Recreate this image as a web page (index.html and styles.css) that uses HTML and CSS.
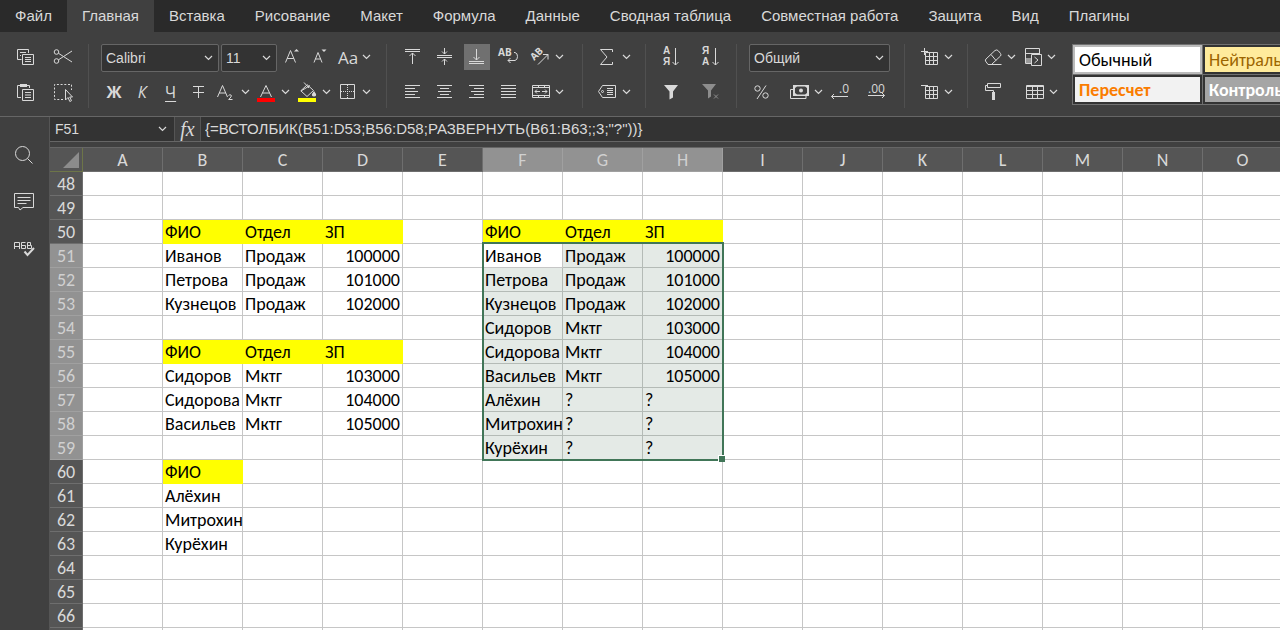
FILE: index.html
```html
<!DOCTYPE html>
<html lang="ru">
<head>
<meta charset="utf-8">
<meta name="viewport" content="width=device-width, initial-scale=1">
<title>Таблица</title>
<link rel="stylesheet" href="styles.css">
</head>
<body>
<svg class="defs" aria-hidden="true">
  <symbol id="caret" viewBox="0 0 9 6"><path d="M1 1l3.5 3.5L8 1"/></symbol>
</svg>
<div class="app">
<nav class="tabs" aria-label="Вкладки">
  <a class="tab" href="#file">Файл</a>
  <a class="tab tab-active" href="#home" aria-current="page">Главная</a>
  <a class="tab" href="#insert">Вставка</a>
  <a class="tab" href="#draw">Рисование</a>
  <a class="tab" href="#layout">Макет</a>
  <a class="tab" href="#formula">Формула</a>
  <a class="tab" href="#data">Данные</a>
  <a class="tab" href="#pivot">Сводная таблица</a>
  <a class="tab" href="#collab">Совместная работа</a>
  <a class="tab" href="#protect">Защита</a>
  <a class="tab" href="#view">Вид</a>
  <a class="tab" href="#plugins">Плагины</a>
</nav>

<div class="toolbar" role="toolbar" aria-label="Главная">
  <div class="group">
    <div class="row gap-l">
      <button class="tool" aria-label="Копировать"><svg class="ico" viewBox="0 0 20 20"><path d="M6.500 12.500H2.500V2.500H13.500V6M5 5.500H11M5 8.500H6M7.500 7.500H18.500V17.500H7.500ZM10 10.500H16M10 12.500H16M10 14.500H16"/></svg></button>
      <button class="tool" aria-label="Вырезать"><svg class="ico" viewBox="0 0 20 20"><circle cx="3.500" cy="5" r="2.300"/><circle cx="3.500" cy="14" r="2.300"/><path d="M5.500 6.300L19 15M5.500 12.800L19 4"/></svg></button>
    </div>
    <div class="row gap-l">
      <button class="tool" aria-label="Вставить"><svg class="ico" viewBox="0 0 20 20"><path d="M6 15.500H2.500V3.500H5M12 3.500H14.500V6M7.500 7.500H18.500V18.500H7.500ZM10 10.500H16M10 13H16M10 15.500H16"/><path class="solid" d="M5 2H12V5H5Z"/></svg></button>
      <button class="tool" aria-label="Выделить всё"><svg class="ico" viewBox="0 0 20 20"><path stroke-dasharray="2 1.700" d="M10 17.500H1.500V2.500H18.500V8"/><path d="M12.500 7.500V18L15 15.500L16.800 19.500L18.500 18.700L16.700 15H19.500Z"/></svg></button>
    </div>
  </div>
  <div class="sep"></div>

  <div class="group group-font">
    <div class="row gap-s">
      <label class="combo combo-font"><select aria-label="Шрифт"><option>Calibri</option></select><svg class="caret"><use href="#caret"/></svg></label>
      <label class="combo combo-size"><select aria-label="Размер шрифта"><option>11</option></select><svg class="caret"><use href="#caret"/></svg></label>
      <button class="tool" aria-label="Увеличить шрифт"><svg class="ico" viewBox="0 0 20 20"><path d="M3.500 15.500L8.500 3.500L13.500 15.500M5.200 11.500H11.800"/><path class="solid" d="M12 4.500L14.500 2L17 4.500Z"/></svg></button>
      <button class="tool" aria-label="Уменьшить шрифт"><svg class="ico" viewBox="0 0 20 20"><path d="M4 15.500L8 5.500L12 15.500M5.500 12H10.500"/><path class="solid" d="M11.500 2.500L14 5L16.500 2.500Z"/></svg></button>
      <button class="tool wide" aria-label="Изменить регистр"><span class="glyph big">Aa</span><svg class="caret"><use href="#caret"/></svg></button>
    </div>
    <div class="row spread">
      <button class="tool glyph heavy" aria-label="Полужирный">Ж</button>
      <button class="tool glyph slant" aria-label="Курсив">К</button>
      <button class="tool glyph under" aria-label="Подчеркнутый">Ч</button>
      <button class="tool" aria-label="Зачеркнутый"><svg class="ico" viewBox="0 0 20 20"><path d="M4 4.500H15M9.500 4.500V16M4 10.500H15"/></svg></button>
      <button class="tool wide" aria-label="Подстрочные"><svg class="ico" viewBox="0 0 20 20"><path d="M.5 15L5.500 3.500L10.500 15M2.200 11H8.800M11.500 13.500Q13 12 14.300 13.300Q15 14.500 11.700 17.500H15.500"/></svg><svg class="caret"><use href="#caret"/></svg></button>
      <button class="tool wide" aria-label="Цвет шрифта"><svg class="ico" viewBox="0 0 20 20"><path d="M3.500 15L9 3.500L14.500 15M5.500 11H12.500"/><path class="red" d="M0 16H18V20H0Z"/></svg><svg class="caret"><use href="#caret"/></svg></button>
      <button class="tool wide" aria-label="Цвет заливки"><svg class="ico" viewBox="0 0 20 20"><path d="M9 2.500L15.500 8.500L9 14.500L2.800 8.800L9 3M6 .5L11 6M3 9L12 3.500"/><path class="solid" d="M16 9L18 12Q18.500 14.500 16 14.500T14 12Z"/><path class="yellow" d="M0 16H18V20H0Z"/></svg><svg class="caret"><use href="#caret"/></svg></button>
      <button class="tool wide" aria-label="Границы"><svg class="ico" viewBox="0 0 20 20"><path d="M2.500 2.500H16.500V16.500H2.500Z"/><path stroke-dasharray="1 1" d="M9.500 3V16M3 9.500H16"/></svg><svg class="caret"><use href="#caret"/></svg></button>
    </div>
  </div>
  <div class="sep"></div>

  <div class="group group-align">
    <div class="row gap-m">
      <button class="tool" aria-label="По верхнему краю"><svg class="ico" viewBox="0 0 20 20"><path d="M2 2.500H17M2 4.500H17M9.500 17V6M6.500 9L9.500 6L12.500 9"/></svg></button>
      <button class="tool" aria-label="По середине"><svg class="ico" viewBox="0 0 20 20"><path d="M2 8.500H17M2 10.500H17M9.500 1V7M7 4.500L9.500 7L12 4.500M9.500 18V12M7 14.500L9.500 12L12 14.500"/></svg></button>
      <button class="tool tool-on" aria-label="По нижнему краю" aria-pressed="true"><svg class="ico" viewBox="0 0 20 20"><path d="M2 14.500H17M2 16.500H17M9.500 2V13M6.500 10L9.500 13L12.500 10"/></svg></button>
      <button class="tool" aria-label="Перенос текста"><svg class="ico" viewBox="0 0 20 20"><text class="ab" x="-1" y="9">AB</text><path d="M15 5.500H16Q18.500 6 18.500 9.500T16 13.500H9M11.500 11L9 13.500L11.500 16"/></svg></button>
      <button class="tool wide" aria-label="Ориентация"><svg class="ico" viewBox="0 0 20 20"><text class="ab" x="-1" y="10" transform="rotate(-45 6 7)">AB</text><path d="M7 17.500L17 7.500M12 7.500H17V12.500"/></svg><svg class="caret"><use href="#caret"/></svg></button>
    </div>
    <div class="row gap-m">
      <button class="tool" aria-label="По левому краю"><svg class="ico" viewBox="0 0 20 20"><path d="M2 3.500H17M2 6.500H12M2 9.500H15M2 12.500H12M2 15.500H17"/></svg></button>
      <button class="tool" aria-label="По центру"><svg class="ico" viewBox="0 0 20 20"><path d="M2 3.500H17M5 6.500H14M3 9.500H16M5 12.500H14M2 15.500H17"/></svg></button>
      <button class="tool" aria-label="По правому краю"><svg class="ico" viewBox="0 0 20 20"><path d="M2 3.500H17M7 6.500H17M4 9.500H17M7 12.500H17M2 15.500H17"/></svg></button>
      <button class="tool" aria-label="По ширине"><svg class="ico" viewBox="0 0 20 20"><path d="M2 3.500H17M2 6.500H17M2 9.500H17M2 12.500H17M2 15.500H17"/></svg></button>
      <button class="tool wide" aria-label="Объединить"><svg class="ico" viewBox="0 0 20 20"><path d="M1.500 3.500H18.500V15.500H1.500ZM1.500 5.500H18.500M1.500 13.500H18.500M7.500 3.500V6M13.500 3.500V6M7.500 13V15.500M13.500 13V15.500M4 9.500H9M11 9.500H16M6 7.500L4 9.500L6 11.500M14 7.500L16 9.500L14 11.500"/></svg><svg class="caret"><use href="#caret"/></svg></button>
    </div>
  </div>
  <div class="sep"></div>

  <div class="group">
    <div class="row">
      <button class="tool wide" aria-label="Сумма"><svg class="ico" viewBox="0 0 20 20"><path d="M14.500 5V2.500H2.500L9 10L2.500 17.500H14.500V15"/></svg><svg class="caret"><use href="#caret"/></svg></button>
    </div>
    <div class="row">
      <button class="tool wide" aria-label="Именованные диапазоны"><svg class="ico" viewBox="0 0 20 20"><path d="M4.500 3.500H17.500V15.500H4.500L.5 9.500ZM9 6.500H15M9 8.500H15M9 10.500H15M9 12.500H15"/><circle cx="4.500" cy="9.500" r="1"/></svg><svg class="caret"><use href="#caret"/></svg></button>
    </div>
  </div>
  <div class="sep"></div>

  <div class="group">
    <div class="row gap-xl">
      <button class="tool" aria-label="По возрастанию"><svg class="ico" viewBox="0 0 20 20"><text class="sort" x="2" y="7">А</text><text class="sort" x="2" y="18">Я</text><path d="M14.500 1V18M11.500 15L14.500 18L17.500 15"/></svg></button>
      <button class="tool" aria-label="По убыванию"><svg class="ico" viewBox="0 0 20 20"><text class="sort" x="1" y="7">Я</text><text class="sort" x="1" y="18">А</text><path d="M14.500 1V18M11.500 15L14.500 18L17.500 15"/></svg></button>
    </div>
    <div class="row gap-xl">
      <button class="tool" aria-label="Фильтр"><svg class="ico" viewBox="0 0 20 20"><path class="solid" d="M3 3H17L12 9.500V15.500L8.500 17.500V9.500Z"/></svg></button>
      <button class="tool dim" aria-label="Очистить фильтр"><svg class="ico" viewBox="0 0 20 20"><path class="solid" d="M1 2H15L10 8.500V14.500L7 16.500V8.500Z"/><path d="M13 12.500L17 16.500M17 12.500L13 16.500"/></svg></button>
    </div>
  </div>
  <div class="sep"></div>

  <div class="group group-number">
    <div class="row">
      <label class="combo combo-format"><select aria-label="Числовой формат"><option>Общий</option></select><svg class="caret"><use href="#caret"/></svg></label>
    </div>
    <div class="row spread">
      <button class="tool" aria-label="Процентный формат"><svg class="ico" viewBox="0 0 20 20"><circle cx="5.500" cy="6.500" r="2.700"/><circle cx="13.500" cy="13.500" r="2.700"/><path d="M14 3.500L5 17"/></svg></button>
      <span class="row gap-s">
        <button class="tool wide" aria-label="Финансовый формат"><svg class="ico" viewBox="0 0 20 20"><path class="solid" fill-rule="evenodd" d="M3 3H19V14H3ZM5 6V11L7 12.500H15L17 11V6L15 4.500H7Z"/><circle class="solid" cx="11" cy="8.500" r="2"/><path d="M3 7.500H.500V16.500H16V14"/></svg><svg class="caret"><use href="#caret"/></svg></button>
        <button class="tool" aria-label="Уменьшить разрядность"><svg class="ico" viewBox="0 0 20 20"><text class="num" x="9" y="11">.0</text><path d="M18 14.500H1.500M4 12L1.500 14.500L4 17"/></svg></button>
      </span>
      <button class="tool" aria-label="Увеличить разрядность"><svg class="ico" viewBox="0 0 20 20"><text class="num" x="1" y="11">.00</text><path d="M1 13.500H17.500M15 11L17.500 13.500L15 16"/></svg></button>
    </div>
  </div>
  <div class="sep"></div>

  <div class="group">
    <div class="row">
      <button class="tool wide" aria-label="Вставить ячейки"><svg class="ico" viewBox="0 0 20 20"><path d="M5.500 5.500H17.500V17.500H5.500ZM9.500 5.500V17.500M13.500 5.500V17.500M5.500 9.500H17.500M5.500 13.500H17.500M1 4.500H8M4.500 1V8"/></svg><svg class="caret"><use href="#caret"/></svg></button>
    </div>
    <div class="row">
      <button class="tool wide" aria-label="Удалить ячейки"><svg class="ico" viewBox="0 0 20 20"><path d="M5.500 4.500H17.500V16.500H5.500ZM9.500 4.500V16.500M13.500 4.500V16.500M5.500 8.500H17.500M5.500 12.500H17.500M1 3.500H8"/></svg><svg class="caret"><use href="#caret"/></svg></button>
    </div>
  </div>
  <div class="sep"></div>

  <div class="group">
    <div class="row gap-s">
      <button class="tool wide" aria-label="Очистить"><svg class="ico" viewBox="0 0 20 20"><path d="M5 17.500L2.500 14Q2 13 3 12L12 3.500Q14 2 15.500 4L17.500 6.500Q18.500 8 17.500 9L8.500 17.500ZM8 7.500L13 13.500M5 17.500H18.500"/></svg><svg class="caret"><use href="#caret"/></svg></button>
      <button class="tool wide" aria-label="Условное форматирование"><svg class="ico" viewBox="0 0 20 20"><path d="M8 16.500H2.500V1.500H16.500V7M2.500 6.500H16.500M8.500 7.500H18.500V18.500H8.500ZM11.500 10L15 13L11.500 16"/><path class="grey" d="M3 11H8V16H3Z"/></svg><svg class="caret"><use href="#caret"/></svg></button>
    </div>
    <div class="row gap-s">
      <button class="tool" aria-label="Копировать стиль"><svg class="ico" viewBox="0 0 20 20"><path d="M4.500 1.500H17.500V5.500H4.500ZM4 3.500H2.500V8.500H10.500V11"/><path class="solid" d="M9 10H12V18H9Z"/></svg></button>
      <span class="pad"></span>
      <button class="tool wide" aria-label="Форматировать как таблицу"><svg class="ico" viewBox="0 0 20 20"><path d="M1.500 3.500H18.500V16.500H1.500ZM1.500 4.500H18.500M1.500 8.500H18.500M1.500 12.500H18.500M7.500 4V16.500M12.500 4V16.500"/></svg><svg class="caret"><use href="#caret"/></svg></button>
    </div>
  </div>

  <div class="gallery" aria-label="Стили ячеек">
    <button class="style style-normal">Обычный</button>
    <button class="style style-neutral">Нейтральный</button>
    <button class="style style-calc">Пересчет</button>
    <button class="style style-check">Контрольная ячейка</button>
  </div>
</div>

<div class="main">
<aside class="side">
  <button class="side-btn" aria-label="Поиск"><svg class="side-ico" viewBox="0 0 22 22"><circle cx="9.500" cy="9.500" r="7"/><path d="M14.500 14.500L19.500 19.500"/></svg></button>
  <button class="side-btn" aria-label="Комментарии"><svg class="side-ico" viewBox="0 0 22 22"><path d="M1.500 2.500H20.500V16.500H10L7 19L5.500 16.500H1.500ZM4.500 6.500H17.500M4.500 9.500H17.500M4.500 12.500H13.500"/></svg></button>
  <button class="side-btn" aria-label="Проверка орфографии"><svg class="side-ico" viewBox="0 0 22 22"><path d="M1.500 11V4.500H6.500V11M1.500 8.500H6.500M12.500 4.500H8.500V10.500H12.500V7.500H8.500M14.500 10.500V4.500H17.500V7.500H14.500M17.500 7.500H18.500V10.500H14.500"/><path class="check" d="M11.500 13.500L14.500 17L21 10"/></svg></button>
</aside>

<div class="work">
<div class="formula">
  <input class="name" aria-label="Имя ячейки" value="F51">
  <button class="name-btn" aria-label="Список имён"><svg class="caret"><use href="#caret"/></svg></button>
  <button class="fx" aria-label="Вставить функцию">fx</button>
  <input class="expr" aria-label="Формула" value="{=ВСТОЛБИК(B51:D53;B56:D58;РАЗВЕРНУТЬ(B61:B63;;3;&quot;?&quot;))}">
</div>
<div class="sheet">
<table class="grid">
<thead>
<tr><th class="corner" aria-label="Выделить всё"><svg class="tri" viewBox="0 0 16 16"><path d="M16 0V16H0Z"/></svg></th><th>A</th><th>B</th><th>C</th><th>D</th><th>E</th><th class="sel">F</th><th class="sel">G</th><th class="sel">H</th><th>I</th><th>J</th><th>K</th><th>L</th><th>M</th><th>N</th><th>O</th></tr>
</thead>
<tbody>
<tr><th>48</th><td></td><td></td><td></td><td></td><td></td><td></td><td></td><td></td><td></td><td></td><td></td><td></td><td></td><td></td><td></td></tr>
<tr><th>49</th><td></td><td></td><td></td><td></td><td></td><td></td><td></td><td></td><td></td><td></td><td></td><td></td><td></td><td></td><td></td></tr>
<tr><th>50</th><td></td><td class="y">ФИО</td><td class="y">Отдел</td><td class="y">ЗП</td><td></td><td class="y">ФИО</td><td class="y">Отдел</td><td class="y">ЗП</td><td></td><td></td><td></td><td></td><td></td><td></td><td></td></tr>
<tr><th class="sel">51</th><td></td><td>Иванов</td><td>Продаж</td><td class="n">100000</td><td></td><td class="active">Иванов<span class="range"></span></td><td class="s">Продаж</td><td class="s n">100000</td><td></td><td></td><td></td><td></td><td></td><td></td><td></td></tr>
<tr><th class="sel">52</th><td></td><td>Петрова</td><td>Продаж</td><td class="n">101000</td><td></td><td class="s">Петрова</td><td class="s">Продаж</td><td class="s n">101000</td><td></td><td></td><td></td><td></td><td></td><td></td><td></td></tr>
<tr><th class="sel">53</th><td></td><td>Кузнецов</td><td>Продаж</td><td class="n">102000</td><td></td><td class="s">Кузнецов</td><td class="s">Продаж</td><td class="s n">102000</td><td></td><td></td><td></td><td></td><td></td><td></td><td></td></tr>
<tr><th class="sel">54</th><td></td><td></td><td></td><td></td><td></td><td class="s">Сидоров</td><td class="s">Мктг</td><td class="s n">103000</td><td></td><td></td><td></td><td></td><td></td><td></td><td></td></tr>
<tr><th class="sel">55</th><td></td><td class="y">ФИО</td><td class="y">Отдел</td><td class="y">ЗП</td><td></td><td class="s">Сидорова</td><td class="s">Мктг</td><td class="s n">104000</td><td></td><td></td><td></td><td></td><td></td><td></td><td></td></tr>
<tr><th class="sel">56</th><td></td><td>Сидоров</td><td>Мктг</td><td class="n">103000</td><td></td><td class="s">Васильев</td><td class="s">Мктг</td><td class="s n">105000</td><td></td><td></td><td></td><td></td><td></td><td></td><td></td></tr>
<tr><th class="sel">57</th><td></td><td>Сидорова</td><td>Мктг</td><td class="n">104000</td><td></td><td class="s">Алёхин</td><td class="s">?</td><td class="s">?</td><td></td><td></td><td></td><td></td><td></td><td></td><td></td></tr>
<tr><th class="sel">58</th><td></td><td>Васильев</td><td>Мктг</td><td class="n">105000</td><td></td><td class="s">Митрохин</td><td class="s">?</td><td class="s">?</td><td></td><td></td><td></td><td></td><td></td><td></td><td></td></tr>
<tr><th class="sel">59</th><td></td><td></td><td></td><td></td><td></td><td class="s">Курёхин</td><td class="s">?</td><td class="s">?</td><td></td><td></td><td></td><td></td><td></td><td></td><td></td></tr>
<tr><th>60</th><td></td><td class="y">ФИО</td><td></td><td></td><td></td><td></td><td></td><td></td><td></td><td></td><td></td><td></td><td></td><td></td><td></td></tr>
<tr><th>61</th><td></td><td>Алёхин</td><td></td><td></td><td></td><td></td><td></td><td></td><td></td><td></td><td></td><td></td><td></td><td></td><td></td></tr>
<tr><th>62</th><td></td><td>Митрохин</td><td></td><td></td><td></td><td></td><td></td><td></td><td></td><td></td><td></td><td></td><td></td><td></td><td></td></tr>
<tr><th>63</th><td></td><td>Курёхин</td><td></td><td></td><td></td><td></td><td></td><td></td><td></td><td></td><td></td><td></td><td></td><td></td><td></td></tr>
<tr><th>64</th><td></td><td></td><td></td><td></td><td></td><td></td><td></td><td></td><td></td><td></td><td></td><td></td><td></td><td></td><td></td></tr>
<tr><th>65</th><td></td><td></td><td></td><td></td><td></td><td></td><td></td><td></td><td></td><td></td><td></td><td></td><td></td><td></td><td></td></tr>
<tr><th>66</th><td></td><td></td><td></td><td></td><td></td><td></td><td></td><td></td><td></td><td></td><td></td><td></td><td></td><td></td><td></td></tr>
<tr><th></th><td></td><td></td><td></td><td></td><td></td><td></td><td></td><td></td><td></td><td></td><td></td><td></td><td></td><td></td><td></td></tr>
</tbody>
</table>
</div>
</div>
</div>
</div>
</body>
</html>
```
FILE: styles.css
```css
* { box-sizing: border-box; }
body {
  margin: 0;
  background: #404040;
  color: #d9d9d9;
  font: 15px "Liberation Sans", Arial, sans-serif;
}
.defs { position: absolute; width: 0; height: 0; }
.app { display: flex; flex-direction: column; height: 100vh; overflow: hidden; }
button, input, select { font: inherit; color: inherit; border: 0; background: none; padding: 0; margin: 0; }

/* Tabs */
.tabs { display: flex; flex: none; height: 32px; background: #2a2a2a; }
.tab { padding: 0 15px; line-height: 32px; color: #d9d9d9; text-decoration: none; white-space: nowrap; }
.tab-active { background: #404040; }

/* Toolbar */
.toolbar {
  display: flex;
  flex: none;
  gap: 12px;
  height: 85px;
  padding: 12px 0 0 12px;
  border-bottom: 1px solid #666;
  overflow: hidden;
}
.group { display: flex; flex: none; flex-direction: column; gap: 7px; }
.group-font { padding-right: 1px; }
.group-align { padding: 0 4px 0 1px; }
.group-number { padding-right: 2px; }
.row { display: flex; align-items: flex-start; height: 28px; }
.gap-s { gap: 2px; }
.gap-m { gap: 6px; }
.gap-l { gap: 12px; }
.gap-xl { gap: 14px; }
.spread { justify-content: space-between; }
.pad { width: 12px; }
.sep { flex: none; width: 1px; height: 64px; background: #505050; }
.tool { display: flex; align-items: center; justify-content: center; flex: none; width: 26px; height: 26px; }
.wide { width: 38px; justify-content: flex-start; padding-left: 3px; gap: 4px; }
.tool-on { background: #707070; }
.dim { opacity: 0.5; }
.ico { flex: none; width: 20px; height: 20px; overflow: visible; fill: none; stroke: #d9d9d9; }
.caret { flex: none; width: 9px; height: 6px; fill: none; stroke: #d9d9d9; stroke-width: 1.2; }
.solid { fill: #d9d9d9; stroke: none; }
.grey { fill: #999; stroke: none; }
.red { fill: #f00; stroke: none; }
.yellow { fill: #ff0; stroke: none; }
.ico text { fill: #d9d9d9; stroke: none; }
.ab { font: bold 10px "Open Sans", sans-serif; }
.sort { font: bold 10px "Liberation Sans", sans-serif; }
.num { font: 12px "Open Sans", sans-serif; }
.glyph { font: 16px "Open Sans", sans-serif; }
.big { width: 20px; font-size: 17px; }
.heavy { font-weight: bold; }
.slant { font-style: italic; }
.under { text-decoration: underline; text-decoration-thickness: 1px; text-underline-offset: 3px; }

.combo {
  display: grid;
  align-items: center;
  height: 28px;
  border: 1px solid #666;
  border-radius: 2px;
  background: #333;
}
.combo select { grid-area: 1 / 1; width: 100%; height: 26px; padding-left: 4px; appearance: none; font-size: 14px; }
.combo .caret { grid-area: 1 / 1; justify-self: end; margin-right: 5px; pointer-events: none; }
.combo-font { width: 118px; }
.combo-size { width: 56px; }
.combo-format { width: 141px; }

.gallery {
  display: grid;
  flex: 1;
  grid-template-columns: 129px 129px;
  grid-template-rows: 29px 29px;
  gap: 1px;
  align-self: flex-start;
  min-width: 0;
  padding: 1px;
  overflow: hidden;
  background: #707070;
}
.style {
  overflow: hidden;
  padding: 1px 4px 0;
  border: 2px solid #333;
  text-align: left;
  white-space: nowrap;
  font: 18px Carlito, Calibri, "Noto Sans", sans-serif;
}
.style-normal { border-color: #bbb; background: #fff; color: #000; }
.style-neutral { background: #ffeb9c; color: #9c6500; }
.style-calc { background: #f2f2f2; color: #fa7d00; font-weight: bold; }
.style-check { background: #a5a5a5; color: #fff; font-weight: bold; }

/* Side panel */
.main { display: flex; flex: 1; min-height: 0; }
.side { display: flex; flex: none; flex-direction: column; align-items: center; gap: 15px; width: 50px; padding: 22px 2px 0 0; border-right: 1px solid #555; }
.side-btn { display: grid; place-items: center; width: 32px; height: 32px; }
.side-ico { width: 22px; height: 22px; fill: none; stroke: #d9d9d9; }
.check { stroke-width: 2; }

/* Formula bar */
.work { display: flex; flex: 1; flex-direction: column; min-width: 0; }
.formula { display: flex; flex: none; height: 25px; border-bottom: 1px solid #666; background: #333; }
.name { width: 100px; padding: 0 5px 1px; font-size: 14px; }
.name-btn { display: grid; place-items: center; width: 24px; }
.fx { width: 27px; border: solid #555; border-width: 0 1px; background: #404040; font: italic 20px/22px "Liberation Serif", serif; }
.expr { flex: 1; min-width: 0; padding: 0 4px 2px; font-size: 15px; }

/* Sheet */
.sheet { flex: 1; min-height: 0; margin-top: 5px; overflow: hidden; border-top: 1px solid #666; background: #fff; }
.grid { width: 1233px; table-layout: fixed; border-collapse: separate; border-spacing: 0; font: 18px/22px Carlito, Calibri, "Noto Sans", sans-serif; color: #000; }
.grid th, .grid td { height: 24px; padding: 1px 2px 0; border: solid #c6c6c6; border-width: 0 1px 1px 0; white-space: nowrap; }
.grid th { border-color: #6e6e6e; background: #555; color: #d9d9d9; font-weight: normal; text-align: center; }
.grid .sel { border-color: #a0a0a0; background: #929292; color: #d0d0d0; }
.grid .corner { width: 33px; padding: 0 3px 0 0; border-color: #6d7548; }
.tri { display: block; width: 16px; height: 16px; margin-left: auto; fill: #8c8c8c; }
.grid .y { border-color: #ff0; background: #ff0; }
.grid .s { overflow: hidden; border-color: #b4bbb6; background: #e4eae6; }
.grid .n { text-align: right; }
.active { position: relative; }
.range { position: absolute; z-index: 1; top: -2px; left: -1px; width: 242px; height: 219px; border: 2px solid #417658; pointer-events: none; }
.range::after { content: ""; position: absolute; right: -3px; bottom: -3px; width: 6px; height: 6px; border: solid #fff; border-width: 1px 0 0 1px; background: #417658; }
```
